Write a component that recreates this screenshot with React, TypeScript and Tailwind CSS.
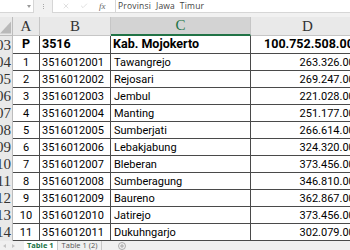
import React from "react";
import { X, Check } from "lucide-react";

const rows: [string, string, string, string, string][] = [
  ["104", "1", "3516012001", "Tawangrejo", "263.326.000"],
  ["105", "2", "3516012002", "Rejosari", "269.247.000"],
  ["106", "3", "3516012003", "Jembul", "221.028.000"],
  ["107", "4", "3516012004", "Manting", "251.177.000"],
  ["108", "5", "3516012005", "Sumberjati", "266.614.000"],
  ["109", "6", "3516012006", "Lebakjabung", "324.320.000"],
  ["110", "7", "3516012007", "Bleberan", "373.456.000"],
  ["111", "8", "3516012008", "Sumberagung", "346.810.000"],
  ["112", "9", "3516012009", "Baureno", "362.867.000"],
  ["113", "10", "3516012010", "Jatirejo", "373.456.000"],
  ["114", "11", "3516012011", "Dukuhngarjo", "302.079.000"],
];

const serif = { fontFamily: '"Liberation Serif", serif' };
const cellFont = { fontFamily: 'Roboto, "Liberation Sans", sans-serif' };
const uiFont = { fontFamily: '"Open Sans", "Noto Sans", sans-serif' };

function RowHeader({ n }: { n: string }) {
  return (
    <div
      className="w-[13px] shrink-0 overflow-hidden flex justify-end items-center bg-[#e9e9e9] border-r border-[#bcbcbc] text-[15px] leading-none text-[#333] whitespace-nowrap"
      style={serif}
    >
      <span className="pr-[1px]">{n}</span>
    </div>
  );
}

export default function App() {
  return (
    <div className="w-[350px] h-[250px] overflow-hidden bg-white flex flex-col relative">
      {/* Formula bar */}
      <div className="h-[17px] shrink-0 bg-[#f1f1f1] flex items-start">
        <div className="w-[34px] h-[13px] bg-white border-r border-b border-[#d6d6d6] flex items-center justify-end pr-[2px]">
          <svg width="4" height="3" viewBox="0 0 4 3">
            <path d="M0 0 L4 0 L2 3 Z" fill="#9a9a9a" />
          </svg>
        </div>
        <div className="w-[18px] h-[13px] flex items-center justify-center">
          <div className="flex flex-col gap-[1px]">
            <div className="w-[1px] h-[1px] bg-[#a8a8a8]" />
            <div className="w-[1px] h-[1px] bg-[#a8a8a8]" />
            <div className="w-[1px] h-[1px] bg-[#a8a8a8]" />
          </div>
        </div>
        <div className="w-[63px] h-[13px] bg-white border-l border-b border-[#d6d6d6] flex items-center">
          <div className="w-[9px]" />
          <X size={8} strokeWidth={1.2} color="#b0b0b0" />
          <div className="w-[10px]" />
          <Check size={8} strokeWidth={1.2} color="#b0b0b0" />
          <div className="w-[11px]" />
          <span className="text-[9px] italic text-[#666] leading-none" style={serif}>
            fx
          </span>
        </div>
        <div className="flex-1 h-[13px] bg-white border-l border-b border-[#d6d6d6] flex items-center pl-[2px]">
          <span className="text-[8.5px] text-[#444] leading-none whitespace-nowrap tracking-[0.2px]" style={uiFont}>
            Provinsi&nbsp; Jawa&nbsp; Timur
          </span>
        </div>
      </div>

      {/* Column headers */}
      <div className="h-[19px] shrink-0 flex text-[15px] leading-none text-[#333]" style={serif}>
        <div className="w-[13px] shrink-0 bg-[#e9e9e9] border-r border-b border-[#bcbcbc] flex items-end justify-end">
          <svg width="13" height="16" viewBox="0 0 13 16">
            <path d="M12 2 L12 15 L0 15 Z" fill="#b9b9b9" />
          </svg>
        </div>
        <div className="w-[27px] shrink-0 bg-[#e9e9e9] border-r border-b border-[#c6c6c6] flex items-center justify-center">
          A
        </div>
        <div className="w-[71px] shrink-0 bg-[#e9e9e9] border-r border-b border-[#c6c6c6] flex items-center justify-center">
          B
        </div>
        <div className="w-[140px] shrink-0 bg-[#d3d3d3] border-r border-[#c6c6c6] border-b-2 border-b-[#217346] flex items-center justify-center text-[#217346]">
          C
        </div>
        <div className="w-[113px] shrink-0 bg-[#e9e9e9] border-b border-[#c6c6c6] flex items-center justify-center">
          D
        </div>
      </div>

      {/* Row 103 (bold) */}
      <div className="h-[18px] shrink-0 flex">
        <RowHeader n="103" />
        <div
          className="flex flex-1 border-b border-[#4a4a4a] text-[12.5px] font-bold text-black leading-none whitespace-nowrap"
          style={cellFont}
        >
          <div className="w-[27px] shrink-0 border-r border-[#4a4a4a] flex items-center justify-center">P</div>
          <div className="w-[71px] shrink-0 border-r border-[#4a4a4a] flex items-center pl-[2px]">3516</div>
          <div className="w-[140px] shrink-0 border-r border-[#4a4a4a] flex items-center pl-[2px]">Kab. Mojokerto</div>
          <div className="w-[113px] shrink-0 flex items-center justify-end pr-[3px]">100.752.508.000</div>
        </div>
      </div>

      {/* Data rows */}
      {rows.map((r) => (
        <div key={r[0]} className="h-[17px] shrink-0 flex">
          <RowHeader n={r[0]} />
          <div
            className="flex flex-1 border-b border-[#4a4a4a] text-[11px] text-black leading-none whitespace-nowrap"
            style={cellFont}
          >
            <div className="w-[27px] shrink-0 border-r border-[#4a4a4a] flex items-center justify-center">{r[1]}</div>
            <div className="w-[71px] shrink-0 border-r border-[#4a4a4a] flex items-center pl-[2px]">{r[2]}</div>
            <div className="w-[140px] shrink-0 border-r border-[#4a4a4a] flex items-center pl-[3px]">{r[3]}</div>
            <div className="w-[113px] shrink-0 flex items-center justify-end pr-[3px]">{r[4]}</div>
          </div>
        </div>
      ))}

      {/* Sheet tabs */}
      <div className="flex-1 bg-[#f0f0f0] flex items-start text-[7.5px] leading-none" style={uiFont}>
        <div className="w-[24px] h-full flex items-start pt-[3px] pl-[3px] gap-[6px]">
          <svg width="3" height="4" viewBox="0 0 3 4">
            <path d="M3 0 L0 2 L3 4 Z" fill="#c4c4c4" />
          </svg>
          <svg width="3" height="4" viewBox="0 0 3 4">
            <path d="M0 0 L3 2 L0 4 Z" fill="#c4c4c4" />
          </svg>
        </div>
        <div className="h-full bg-white px-[3px] pt-[1px] border-r border-[#c8c8c8]">
          <span className="font-bold text-[#217346]">Table 1</span>
        </div>
        <div className="h-full px-[4px] pt-[1px] border-r border-[#c8c8c8]">
          <span className="text-[#555]">Table 1 (2)</span>
        </div>
        <div className="pl-[16px] pt-[1px]">
          <svg width="8" height="8" viewBox="0 0 8 8">
            <circle cx="4" cy="4" r="3.5" fill="none" stroke="#9a9a9a" strokeWidth="0.8" />
            <path d="M4 2 L4 6 M2 4 L6 4" stroke="#9a9a9a" strokeWidth="0.8" />
          </svg>
        </div>
      </div>
    </div>
  );
}
